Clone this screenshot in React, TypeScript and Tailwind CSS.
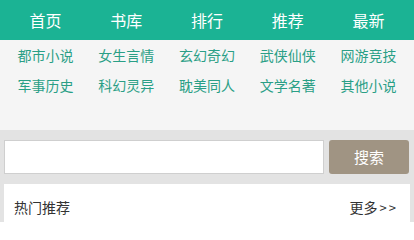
import React from "react";

const nav = ["首页", "书库", "排行", "推荐", "最新"];
const cats = [
  "都市小说",
  "女生言情",
  "玄幻奇幻",
  "武侠仙侠",
  "网游竞技",
  "军事历史",
  "科幻灵异",
  "耽美同人",
  "文学名著",
  "其他小说",
];

export default function App() {
  return (
    <div
      className="w-[414px] h-[222px] overflow-hidden bg-[#e3e3e3]"
      style={{ fontFamily: '"Noto Sans CJK SC", "Noto Sans", sans-serif' }}
    >
      <div className="h-[40px] bg-[#1bb394] grid grid-cols-5 items-center px-[5px] text-white text-[16px]">
        {nav.map((n) => (
          <div key={n} className="text-center leading-none">
            {n}
          </div>
        ))}
      </div>
      <div className="bg-[#f5f5f5] pb-[30px] px-[5px] grid grid-cols-5">
        {cats.map((c) => (
          <div
            key={c}
            className="h-[30px] flex items-center justify-center text-[14px] text-[#2a9f86]"
          >
            {c}
          </div>
        ))}
      </div>
      <div className="pt-[10px] pl-[4px] pr-[5px] flex gap-[5px]">
        <div className="flex-1 h-[34px] bg-white border border-[#cfcfcf]" />
        <button className="w-[80px] h-[34px] bg-[#a09483] rounded-[3px] text-white text-[15px]">
          搜索
        </button>
      </div>
      <div className="mt-[10px] ml-[4px] mr-[4px] bg-white h-[60px] flex items-start justify-between pl-[10px] pr-[12px] pt-[13px] text-[14px] text-[#333]">
        <span>热门推荐</span>
        <span>
          更多<span className="tracking-[2px] text-[13px] ml-[2px]">&gt;&gt;</span>
        </span>
      </div>
    </div>
  );
}
